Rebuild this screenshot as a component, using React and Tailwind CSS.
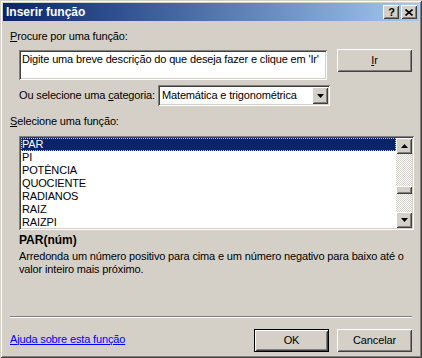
const raised = 'shadow-[inset_1px_1px_0_#fff,inset_-1px_-1px_0_#404040,inset_2px_2px_0_#d4d0c8,inset_-2px_-2px_0_#808080]';
const sunken = 'shadow-[inset_1px_1px_0_#808080,inset_-1px_-1px_0_#fff,inset_2px_2px_0_#404040,inset_-2px_-2px_0_#d4d0c8]';

const functions = ['PAR', 'PI', 'POTÊNCIA', 'QUOCIENTE', 'RADIANOS', 'RAIZ', 'RAIZPI'];

const Arrow = ({ up }) => (
    <svg width="7" height="4" viewBox="0 0 7 4" className="block">
        {up ? <path d="M3.5 0 L7 4 L0 4 Z" fill="#000" /> : <path d="M0 0 L7 0 L3.5 4 Z" fill="#000" />}
    </svg>
);

const Btn = ({ children, isDefault }) => (
    <div className={`w-[75px] h-[23px] ${isDefault ? 'border border-black' : ''}`}>
        <div className={`w-full h-full flex items-center justify-center bg-[#d4d0c8] ${raised}`}>
            {children}
        </div>
    </div>
);

export default function App() {
    return (
        <div className={`w-[422px] h-[358px] bg-[#d4d0c8] p-[3px] flex flex-col font-['Liberation_Sans',Arial,sans-serif] text-[11px] leading-[13px] tracking-[-0.15px] whitespace-nowrap text-black shadow-[inset_1px_1px_0_#d4d0c8,inset_-1px_-1px_0_#404040,inset_2px_2px_0_#fff,inset_-2px_-2px_0_#808080]`}>
            {/* title bar */}
            <div className="h-[18px] flex items-center justify-between bg-linear-to-r from-[#0a246a] to-[#a6caf0] pl-[3px] pr-[2px]">
                <span className="text-white font-bold text-[12px] tracking-normal">Inserir função</span>
                <div className="flex gap-[2px]">
                    <div className={`w-[16px] h-[14px] bg-[#d4d0c8] flex items-center justify-center font-bold text-[11px] leading-none pl-[1px] pt-[1px] ${raised}`}>?</div>
                    <div className={`w-[16px] h-[14px] bg-[#d4d0c8] flex items-center justify-center ${raised}`}>
                        <svg width="8" height="7" viewBox="0 0 8 7">
                            <path d="M0.5 0.5 L7.5 6.5 M7.5 0.5 L0.5 6.5" stroke="#000" strokeWidth="1.6" />
                        </svg>
                    </div>
                </div>
            </div>

            <div className="px-[7px] flex flex-col">
                <div className="mt-[9px]"><u>P</u>rocure por uma função:</div>

                <div className="mt-[6px] flex items-start">
                    <div className={`ml-[9px] mt-[1px] w-[311px] h-[30px] bg-white px-[3px] pt-[3px] overflow-hidden ${sunken}`}>
                        Digite uma breve descrição do que deseja fazer e clique em 'Ir'
                    </div>
                    <div className="ml-[10px]">
                        <Btn><span><u>I</u>r</span></Btn>
                    </div>
                </div>

                <div className="mt-[5px] ml-[9px] flex items-center h-[21px]">
                    <span className="w-[139px]">Ou selecione uma <u>c</u>ategoria:</span>
                    <div className={`w-[172px] h-[21px] bg-white flex items-center p-[2px] ${sunken}`}>
                        <span className="flex-1 pl-[2px]">Matemática e trigonométrica</span>
                        <div className={`w-[16px] h-[17px] bg-[#d4d0c8] flex items-center justify-center ${raised}`}>
                            <Arrow />
                        </div>
                    </div>
                </div>

                <div className="mt-[9px]"><u>S</u>elecione uma função:</div>

                <div className={`mt-[8px] ml-[9px] w-[395px] h-[94px] bg-white p-[2px] flex ${sunken}`}>
                    <div className="flex-1 flex flex-col">
                        {functions.map((f, i) => (
                            <div
                                key={f}
                                className={`h-[13px] pl-[1px] ${i === 0 ? 'bg-[#0a246a] text-white outline-1 outline-dotted outline-[#c8c8d8] -outline-offset-1' : ''}`}
                            >
                                {f}
                            </div>
                        ))}
                    </div>
                    <div className="w-[16px] flex flex-col bg-[repeating-conic-gradient(#fff_0_25%,#d4d0c8_0_50%)] bg-[length:2px_2px]">
                        <div className={`h-[16px] bg-[#d4d0c8] flex items-center justify-center ${raised}`}><Arrow up /></div>
                        <div className="h-[32px]" />
                        <div className={`h-[8px] bg-[#d4d0c8] ${raised}`} />
                        <div className="flex-1" />
                        <div className={`h-[16px] bg-[#d4d0c8] flex items-center justify-center ${raised}`}><Arrow /></div>
                    </div>
                </div>

                <div className="mt-[4px] ml-[9px] font-bold text-[12px] tracking-normal">PAR(núm)</div>
                <div className="mt-[3px] ml-[9px]">
                    Arredonda um número positivo para cima e um número negativo para baixo até o<br />
                    valor inteiro mais próximo.
                </div>

                <div className="mt-[40px] w-[402px] h-[2px] border-t border-[#808080] border-b border-b-white" />

                <div className="mt-[11px] flex items-center">
                    <span className="flex-1 text-[#0000ff] underline -mt-[3px]">Ajuda sobre esta função</span>
                    <div className="flex gap-[8px]">
                        <Btn isDefault>OK</Btn>
                        <Btn>Cancelar</Btn>
                    </div>
                </div>
            </div>
        </div>
    );
}
